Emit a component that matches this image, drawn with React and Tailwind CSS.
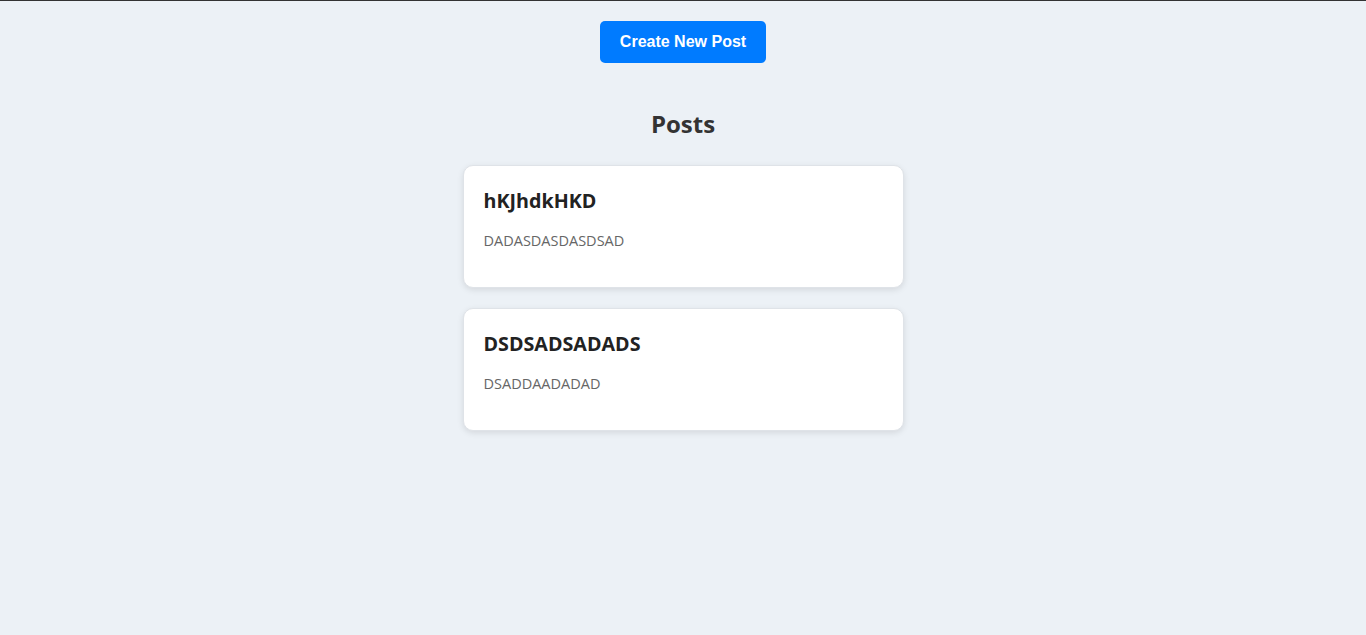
import React from 'react';

const posts = [
  { id: 1, title: 'hKJhdkHKD', body: 'DADASDASDASDSAD' },
  { id: 2, title: 'DSDSADSADADS', body: 'DSADDAADADAD' },
];

const PostCard = ({ post }) => (
  <div className="w-[441px] bg-white rounded-[10px] border border-[#dfe3e8] shadow-[0_2px_6px_rgba(0,0,0,0.1)] px-5 pt-[23px] pb-[36px]">
    <h3 className="text-[19.7px] leading-6 font-bold text-[#222] mb-[18px]">{post.title}</h3>
    <p className="text-[14.5px] leading-5 text-[#666]">{post.body}</p>
  </div>
);

export default function App() {
  return (
    <div className="min-h-screen bg-[#ecf1f6] border-t border-[#333] font-['Open_Sans',sans-serif] text-[#333]">
      <div className="flex flex-col items-center pt-5">
        {/* Create button */}
        <button className="h-[42px] px-5 rounded-[5px] bg-[#007bff] text-white text-base font-bold font-['Liberation_Sans',Arial,sans-serif]">
          Create New Post
        </button>

        <h2 className="mt-[45px] mb-[25px] text-2xl leading-8 font-bold text-[#333]">Posts</h2>

        {/* Post list */}
        <div className="flex flex-col gap-5">
          {posts.map((post) => (
            <PostCard key={post.id} post={post} />
          ))}
        </div>
      </div>
    </div>
  );
}
